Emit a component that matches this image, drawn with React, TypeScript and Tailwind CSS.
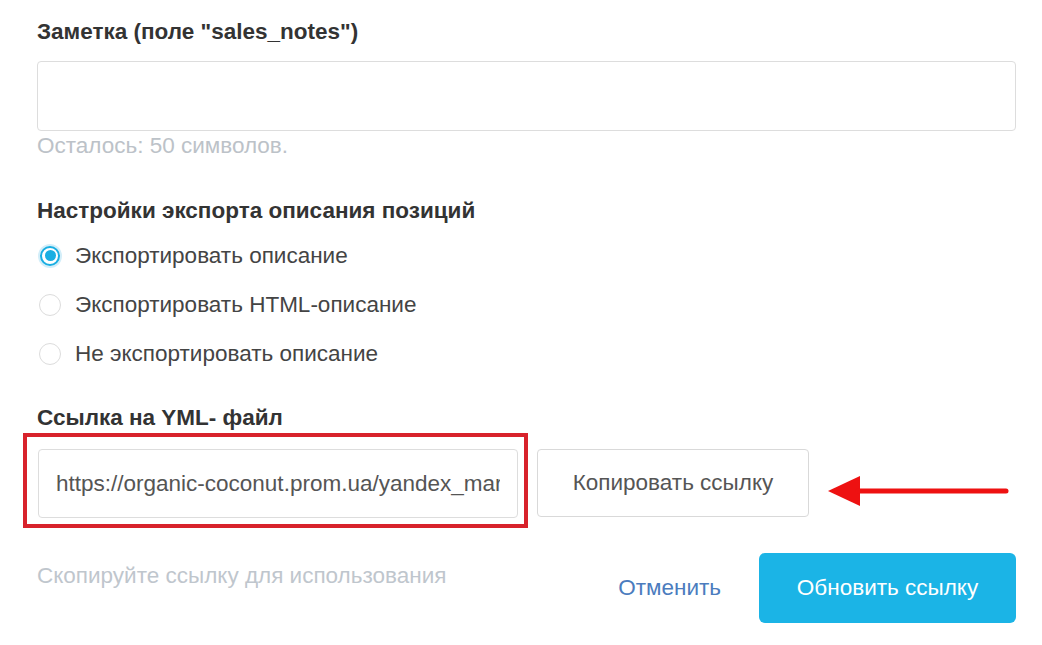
import { useState } from "react";

const options = [
  "Экспортировать описание",
  "Экспортировать HTML-описание",
  "Не экспортировать описание",
];

function Radio({ checked }: { checked: boolean }) {
  return checked ? (
    <span className="flex h-[24px] w-[24px] shrink-0 items-center justify-center rounded-full bg-[#d3eef9]">
      <span className="flex h-[20px] w-[20px] items-center justify-center rounded-full border-2 border-[#19aee2] bg-white">
        <span className="h-[11px] w-[11px] rounded-full bg-[#19aee2]" />
      </span>
    </span>
  ) : (
    <span className="flex h-[24px] w-[24px] shrink-0 items-center justify-center">
      <span className="h-[22px] w-[22px] rounded-full border border-[#dcdcdc] bg-white" />
    </span>
  );
}

export default function App() {
  const [selected, setSelected] = useState(0);
  const url = "https://organic-coconut.prom.ua/yandex_market.xml?hash_tag=8d3c";

  return (
    <div className="h-[645px] w-[1042px] overflow-hidden bg-white pl-[37px] pr-[26px] pt-[18px] font-['Liberation_Sans',Arial,sans-serif]">
      <h3 className="text-[22.5px] font-bold leading-[28px] text-[#333]">
        Заметка (поле "sales_notes")
      </h3>
      <textarea className="mt-[15px] block h-[70px] w-full resize-none rounded-[4px] border border-[#dddddd] bg-white outline-none" />
      <p className="mt-[3px] text-[22.5px] leading-[24px] text-[#bcc2c8]">
        Осталось: 50 символов.
      </p>

      <h3 className="mt-[39px] text-[22.5px] font-bold leading-[28px] text-[#333]">
        Настройки экспорта описания позиций
      </h3>
      <div className="mt-[6px]">
        {options.map((label, idx) => (
          <label
            key={label}
            onClick={() => setSelected(idx)}
            className="flex h-[49px] cursor-pointer items-center gap-[13px] pl-px"
          >
            <Radio checked={selected === idx} />
            <span className="text-[22.5px] text-[#444]">{label}</span>
          </label>
        ))}
      </div>

      <h3 className="mt-[26px] text-[22.5px] font-bold leading-[28px] text-[#333]">
        Ссылка на YML- файл
      </h3>
      <div className="mt-[17px] flex items-start">
        <div className="relative ml-px">
          <input
            readOnly
            value={url}
            className="block h-[69px] w-[480px] rounded-[4px] border border-[#dddddd] bg-white px-[17px] text-[22.5px] text-[#555] outline-none"
          />
          {/* red annotation frame */}
          <div className="pointer-events-none absolute -bottom-[10px] -left-[15px] -right-[10px] -top-[16px] border-4 border-[#d8222b]" />
        </div>
        <button className="ml-[19px] h-[68px] w-[272px] rounded-[4px] border border-[#d9d9d9] bg-white text-[22.5px] text-[#555]">
          Копировать ссылку
        </button>
        <svg
          className="ml-[19px] mt-[26px]"
          width="184"
          height="32"
          viewBox="0 0 184 32"
        >
          <polygon points="0,16 32,1 32,31" fill="#ee1111" />
          <line
            x1="30"
            y1="16"
            x2="178"
            y2="16"
            stroke="#ee1111"
            strokeWidth="5"
            strokeLinecap="round"
          />
        </svg>
      </div>

      <div className="mt-[35px] flex items-start justify-between">
        <p className="mt-[11px] text-[22.5px] leading-[24px] text-[#bfc6cd]">
          Скопируйте ссылку для использования
        </p>
        <div className="flex items-center gap-[38px]">
          <button className="text-[22.5px] text-[#4b7cbe]">Отменить</button>
          <button className="h-[70px] w-[257px] rounded-[6px] bg-[#1bb4e6] text-[22.5px] text-white">
            Обновить ссылку
          </button>
        </div>
      </div>
    </div>
  );
}
